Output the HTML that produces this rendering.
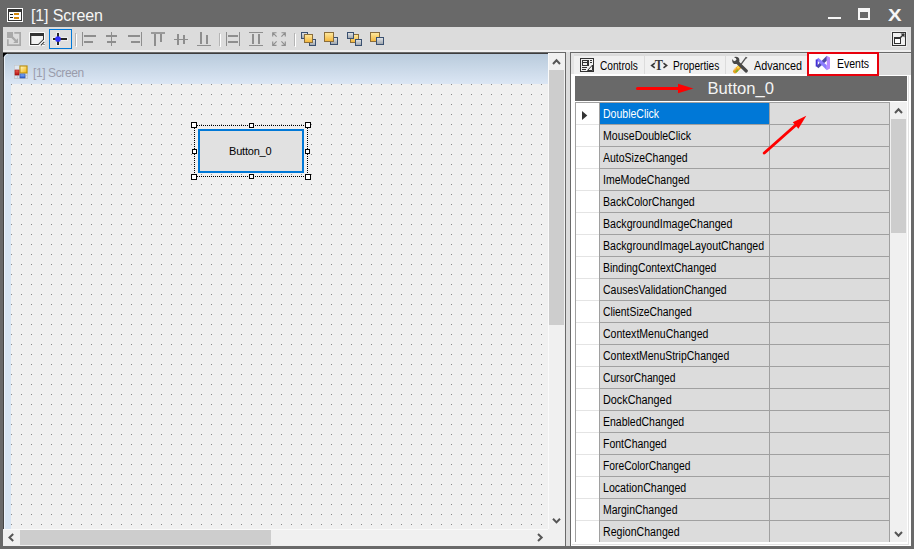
<!DOCTYPE html>
<html lang="en"><head><meta charset="utf-8"><title>[1] Screen</title>
<style>
html,body{margin:0;padding:0}
body{width:914px;height:549px;background:#696969;overflow:hidden;position:relative;
 font-family:"Liberation Sans",sans-serif;font-size:12px;color:#000}
div,span,svg{position:absolute;box-sizing:border-box}
svg{overflow:visible}
.ttl{left:31px;top:7px;letter-spacing:-0.12px;font-size:16px;line-height:18px;color:#f6f6f6;white-space:nowrap}
.xbtn{left:888px;top:6px;font-size:17px;font-weight:bold;line-height:20px;color:#f6f6f6;transform-origin:0 0;transform:scaleX(1.2)}
.toolbar{left:3px;top:27px;width:908px;height:23px;background:#dcdcdc}
.tbline{left:3px;top:50px;width:908px;height:2px;background:#efefef}
/* left panel */
.lp{left:3px;top:52px;width:563px;height:494px;background:#f0f0f0;border-top:1px solid #696969;border-right:1px solid #696969}
.formtop{left:4px;top:53px;width:544px;height:1px;background:#3c3c3c}
.formttl{left:4px;top:54px;width:544px;height:30px;background:linear-gradient(#b9cbdc,#dbe6f4)}
.formleft{left:4px;top:84px;width:7px;height:445px;background:#d8e5f3}
.formedge{left:3px;top:53px;width:1px;height:476px;background:#444}
.formhl{left:4px;top:57px;width:1px;height:472px;background:rgba(240,246,253,.85)}
.client{left:11px;top:84px;width:537px;height:445px;background-color:#f0f0f0;
 background-image:radial-gradient(circle at 0.5px 0.5px,#898989 0.55px,rgba(137,137,137,0) 0.9px);background-size:10px 10px;}
.formname{left:33px;top:66px;font-size:12px;line-height:14px;color:#9a9cab;white-space:nowrap;letter-spacing:-0.4px}
.vs{left:548px;top:53px;width:17px;height:476px;background:#f0f0f0;border-left:1px solid #fafafa}
.vthumb{left:549px;top:70px;width:15px;height:255px;background:#cdcdcd}
.hs{left:4px;top:529px;width:544px;height:17px;background:#f0f0f0;border-top:1px solid #fafafa}
.hthumb{left:20px;top:530px;width:251px;height:15px;background:#cdcdcd}
.split{left:566px;top:52px;width:4px;height:494px;background:#dcdcdc}
/* right panel */
.rp{left:570px;top:52px;width:341px;height:494px;background:#dcdcdc;border-top:1px solid #696969;border-left:1px solid #696969}
.rpw{left:571px;top:74px;width:340px;height:472px;background:#fff}
.tabs{left:574px;top:56px;width:233px;height:18px;background:#f0f0f0}
.tsep{top:56px;width:1px;height:18px;background:#dcdcdc}
.tab{top:59px;font-size:12px;line-height:14px;white-space:nowrap;transform-origin:0 0}
.evbox{left:807px;top:52px;width:72px;height:24px;border:2px solid #e8000c;background:#fff}
.hdr{left:575px;top:76px;width:332px;height:25px;background:#696969}
.hdrt{left:707.5px;top:80px;font-size:16.6px;line-height:18px;color:#f4f4f4;white-space:nowrap}
.gridbg{left:599px;top:102px;width:291px;height:440px;background:#a0a0a0}
.rhbg{left:575px;top:102px;width:24px;height:440px;background:#e4e4e4;border-left:1px solid #a0a0a0;border-top:1px solid #a0a0a0}
.rh{left:576px;width:23px;height:21px;background:#fff}
.rhl{left:576px;width:23px;height:1px;background:#e4e4e4}
.c1{left:600px;width:169px;height:21px;background:#dcdcdc;overflow:hidden}
.c1.sel{background:#0078d7;color:#fff}
.c2{left:770px;width:119px;height:21px;background:#dcdcdc}
.ct{left:3px;top:4px;font-size:12px;line-height:14px;white-space:nowrap;transform-origin:0 0;transform:scaleX(0.89)}
.rvs{left:890px;top:102px;width:17px;height:440px;background:#f0f0f0}
.rvthumb{left:891px;top:119px;width:15px;height:114px;background:#cdcdcd}
/* designer button */
.btn{left:198px;top:129px;width:106px;height:44px;border:2px solid #0078d7;background:#e1e1e1}
.btnt{left:229px;top:145px;font-size:11px;line-height:13px;white-space:nowrap;letter-spacing:-0.2px}
.h6{width:6px;height:6px;border:1px solid #000;background:#fff}
.h5{width:5px;height:5px;border:1px solid #000;background:#fff}
.rpl{left:571px;top:53px;width:3px;height:21px;background:#e4e4e4}
.bevv{left:908px;top:76px;width:1px;height:469px;background:#e2e2e2}
.bevh{left:572px;top:544px;width:337px;height:1px;background:#e2e2e2}
.rpt{left:571px;top:53px;width:340px;height:1px;background:#e4e4e4}

</style></head>
<body>
<!-- title bar -->
<svg style="left:7px;top:8px" width="16" height="14" viewBox="0 0 16 14"><rect x="0" y="0" width="16" height="14" fill="#fff"/><rect x="1" y="1" width="14" height="12" fill="#333"/><rect x="2" y="4" width="12" height="8" fill="#fff"/><rect x="3" y="6" width="3" height="1" fill="#222"/><rect x="3" y="9" width="3" height="1" fill="#222"/><rect x="7" y="5" width="5" height="2" fill="#d6870b"/><rect x="7" y="9" width="5" height="2" fill="#d6870b"/></svg>
<div class="ttl">[1] Screen</div>
<div style="left:828px;top:17px;width:13px;height:2px;background:#f6f6f6"></div>
<div style="left:858px;top:8px;width:12px;height:12px;border:2px solid #f6f6f6;border-top-width:4px"></div>
<div class="xbtn">X</div>
<div class="toolbar"></div><div class="tbline"></div>
<svg style="left:0;top:0" width="914" height="52" viewBox="0 0 914 52">
<defs>
<linearGradient id="gy" x1="0" y1="0" x2="0" y2="1"><stop offset="0" stop-color="#ffeaa0"/><stop offset="1" stop-color="#f3b53a"/></linearGradient>
<linearGradient id="gg" x1="0" y1="0" x2="0" y2="1"><stop offset="0" stop-color="#e4e6e8"/><stop offset="1" stop-color="#9aa2aa"/></linearGradient>
</defs>
<!-- icon1 disabled -->
<g fill="#a9a9a9" shape-rendering="crispEdges">
<rect x="7" y="32" width="6" height="6"/>
<path d="M14.300 32H21V46H7V39.300H8.700V44.300H19.300V33.700H14.300Z" shape-rendering="auto"/>
</g>
<path d="M12 37L16.500 41.500" stroke="#a9a9a9" stroke-width="2.300"/>
<path d="M18 38.200V43H13.200Z" fill="#a9a9a9"/>
<!-- icon2 window w/ pencil -->
<rect x="29" y="32" width="16" height="14" rx="1" fill="#fff" opacity=".9"/>
<path d="M30 33H44V39.500L38.500 45H30Z" fill="#333"/>
<path d="M31.300 36H43V39.200L38.200 44H31.300Z" fill="#f2f2f2"/>
<path d="M40.800 45.300L44.300 41.800" stroke="#333" stroke-width="1.100"/>
<rect x="43.500" y="44" width="1" height="1" fill="#333"/>
<!-- icon3 selected crosshair -->
<rect x="49.5" y="29.5" width="22" height="19" fill="#dedede" stroke="#0078d7" stroke-width="1"/>
<g shape-rendering="crispEdges"><rect x="52" y="37" width="16" height="4" fill="#eee"/><rect x="56" y="32" width="4" height="14" fill="#eee"/>
<rect x="53" y="38" width="14" height="2" fill="#262626"/><rect x="57" y="33" width="2" height="12" fill="#262626"/></g>
<circle cx="58" cy="39" r="2.850" fill="#3232ff"/>
<!-- separators -->
<g shape-rendering="crispEdges">
<rect x="75" y="33" width="1" height="13" fill="#b4b4b4"/><rect x="76" y="34" width="1" height="13" fill="#fff"/>
<rect x="219" y="33" width="1" height="13" fill="#b4b4b4"/><rect x="220" y="34" width="1" height="13" fill="#fff"/>
<rect x="294" y="33" width="1" height="13" fill="#b4b4b4"/><rect x="295" y="34" width="1" height="13" fill="#fff"/>
</g>
<!-- align icons -->
<g fill="#8e8e8e" shape-rendering="crispEdges">
<rect x="82" y="32" width="1" height="14"/><rect x="84" y="35" width="12" height="2"/><rect x="84" y="41" width="9" height="2"/>
<rect x="111" y="32" width="1" height="14"/><rect x="106" y="35" width="11" height="2"/><rect x="107" y="41" width="9" height="2"/>
<rect x="141" y="32" width="1" height="14"/><rect x="128" y="35" width="12" height="2"/><rect x="131" y="41" width="9" height="2"/>
<rect x="151" y="32" width="14" height="2" fill="#9a9a9a"/><rect x="154" y="34" width="2" height="12"/><rect x="160" y="34" width="2" height="8"/>
<rect x="174" y="39" width="14" height="1"/><rect x="177" y="34" width="2" height="11"/><rect x="183" y="35" width="2" height="9"/>
<rect x="197" y="45" width="14" height="1"/><rect x="200" y="32" width="2" height="12"/><rect x="206" y="35" width="2" height="9"/>
<rect x="226" y="32" width="1" height="14"/><rect x="239" y="32" width="1" height="14"/><rect x="228" y="35" width="10" height="2"/><rect x="228" y="41" width="10" height="2"/>
<rect x="249" y="32" width="14" height="1"/><rect x="249" y="45" width="14" height="1"/><rect x="252" y="34" width="2" height="10"/><rect x="258" y="34" width="2" height="10"/>
</g>
<!-- same size arrows -->
<g stroke="#8e8e8e" stroke-width="1.150" fill="none">
<path d="M272.7 32.7L276.600 36.600M272.7 36.5V32.7H276.5"/>
<path d="M285.3 32.7L281.400 36.600M285.3 36.5V32.7H281.5"/>
<path d="M272.7 45.3L276.600 41.400M272.7 41.5V45.3H276.5"/>
<path d="M285.3 45.3L281.400 41.400M285.3 41.5V45.3H281.5"/>
</g>
<!-- z-order icons -->
<g stroke-width="1">
<rect x="301.5" y="32.5" width="6" height="6" fill="url(#gg)" stroke="#3a5070"/>
<rect x="309.5" y="39.5" width="6" height="6" fill="url(#gg)" stroke="#3a5070"/>
<rect x="304.5" y="34.5" width="8" height="8" fill="url(#gy)" stroke="#8a6d3b"/>

<rect x="330.5" y="37.5" width="7" height="7" fill="url(#gg)" stroke="#3a5070"/>
<rect x="324.5" y="32.5" width="9" height="9" fill="url(#gy)" stroke="#8a6d3b"/>

<rect x="350.5" y="34.5" width="8" height="8" fill="url(#gy)" stroke="#8a6d3b"/>
<rect x="347.5" y="32.5" width="6" height="6" fill="url(#gg)" stroke="#3a5070"/>
<rect x="355.5" y="39.5" width="6" height="6" fill="url(#gg)" stroke="#3a5070"/>

<rect x="370.5" y="32.5" width="9" height="9" fill="url(#gy)" stroke="#8a6d3b"/>
<rect x="376.5" y="37.5" width="7" height="7" fill="url(#gg)" stroke="#3a5070"/>
</g>
<!-- undock icon right -->
<rect x="891" y="31" width="16" height="16" fill="#f4f4f4" opacity=".7"/>
<rect x="892.5" y="32.5" width="13" height="13" fill="#f0f0f0" stroke="#333"/>
<rect x="894.5" y="38" width="6" height="5.5" fill="#fff" stroke="#333"/>
<rect x="894" y="37" width="7" height="2" fill="#333"/>
<path d="M899.5 38.500L904 34" stroke="#333" stroke-width="1.400"/>
<path d="M900.500 33.500H904.500V37.500Z" fill="#333"/>
</svg>

<!-- left panel -->
<div class="lp"></div>
<div class="formtop"></div><div class="formttl"></div><div class="formleft"></div><div class="formedge"></div><div class="formhl"></div><div class="client"></div>
<svg style="left:3px;top:53px" width="6" height="6" viewBox="0 0 6 6"><path d="M0 0H5Q1.500 1.500 0 5Z" fill="#000"/><path d="M5 1Q2 2 1 5" stroke="#eef3fb" stroke-width=".8" fill="none" opacity=".8"/></svg>
<!-- form icon -->
<svg style="left:0;top:0" width="60" height="90" viewBox="0 0 60 90">
<defs>
<linearGradient id="fy" x1="0" y1="0" x2="1" y2="1"><stop offset="0" stop-color="#fffbd0"/><stop offset="1" stop-color="#f3b000"/></linearGradient>
<linearGradient id="fr" x1="0" y1="0" x2="0" y2="1"><stop offset="0" stop-color="#f06050"/><stop offset="1" stop-color="#b01010"/></linearGradient>
<linearGradient id="fb" x1="0" y1="0" x2="0" y2="1"><stop offset="0" stop-color="#8ab4ff"/><stop offset="1" stop-color="#2a5ccc"/></linearGradient>
</defs>
<g fill="none" stroke="#c4c8cc" stroke-width="1" shape-rendering="crispEdges">
<rect x="14.5" y="65.5" width="13" height="13"/><path d="M19.5 65V79M14 70.5H20M14 75.5H28M25.500 75V79M17.5 75V79"/></g>
<rect x="14.7" y="65.7" width="4.6" height="4.6" fill="#dfe7f1"/>
<rect x="20" y="66" width="7" height="7" fill="url(#fy)" stroke="#b88a00" stroke-width="1"/>
<rect x="15" y="70" width="4" height="5" fill="url(#fr)" stroke="#a01010" stroke-width=".6"/>
<rect x="20" y="74" width="5" height="4" fill="url(#fb)" stroke="#2a50b0" stroke-width=".6"/>
</svg>

<div class="formname">[1] Screen</div>
<div class="vs"></div><div class="vthumb"></div>
<div class="hs"></div><div class="hthumb"></div>
<div style="left:548px;top:529px;width:17px;height:17px;background:#f0f0f0"></div>

<!-- designer button -->
<svg style="left:0;top:0" width="330" height="200" viewBox="0 0 330 200">
<g stroke="#000" stroke-width="1" stroke-dasharray="1 1" fill="none" shape-rendering="crispEdges">
<path d="M197 125.500H305"/><path d="M197 176.500H305"/><path d="M194.500 128V174"/><path d="M307.500 128V174"/>
</g>
<g fill="#fff" stroke="#000" stroke-width="1" shape-rendering="crispEdges">
<rect x="191.500" y="122.500" width="5" height="5"/><rect x="305.500" y="122.500" width="5" height="5"/>
<rect x="191.500" y="174.500" width="5" height="5"/><rect x="305.500" y="174.500" width="5" height="5"/>
<rect x="249.500" y="123.500" width="4" height="4"/><rect x="249.500" y="174.500" width="4" height="4"/>
<rect x="192.500" y="149.500" width="4" height="4"/><rect x="305.500" y="149.500" width="4" height="4"/>
</g>
</svg>

<div class="btn"></div><div class="btnt">Button_0</div>
<div class="split"></div>
<!-- right panel -->
<div class="rp"></div><div class="rpl"></div><div class="rpt"></div><div class="rpw"></div><div class="bevv"></div><div class="bevh"></div>
<div class="tabs"></div>
<div class="tsep" style="left:644px"></div><div class="tsep" style="left:725px"></div>
<div class="tab" style="left:600px;transform:scaleX(.845)">Controls</div>
<div class="tab" style="left:673px;transform:scaleX(.845)">Properties</div>
<div class="tab" style="left:753.5px;transform:scaleX(.9)">Advanced</div>
<div style="left:879px;top:74px;width:32px;height:1px;background:#dcdcdc"></div><div class="evbox"></div>
<div class="tab" style="left:836.500px;top:57px;transform:scaleX(.875)">Events</div>
<svg style="left:0;top:0" width="914" height="80" viewBox="0 0 914 80">
<!-- controls icon -->
<g shape-rendering="crispEdges" fill="none" stroke="#333" stroke-width="1">
<rect x="580.500" y="58.500" width="13" height="13"/>
<rect x="582.500" y="60.500" width="6" height="5"/>
<path d="M583 62.500H587M587.500 60V66M590 60.500H592M590 62.500H592M582 67.500H587M582 69.500H586"/>
</g>
<path d="M587.500 70.500L592.500 65V70.500Z" fill="none" stroke="#333" stroke-width="1"/>
<!-- <T> icon -->
<g fill="none" stroke="#383838" stroke-width="1.600"><path d="M654.800 63.200L651.700 65.500L654.800 67.800"/><path d="M663.500 63.200L666.600 65.500L663.500 67.800"/></g>
<text transform="translate(654.800 70) scale(.82 1)" font-family="'Liberation Serif',serif" font-size="15" font-weight="bold" fill="#383838">T</text>
<!-- tools icon -->
<g>
<path d="M747.200 58L746 57.600L740.300 65.300" stroke="#555" stroke-width="1.300" fill="none"/>
<path d="M740.300 66L735 71.300" stroke="#e9a21f" stroke-width="4" stroke-linecap="round"/>
<path d="M740.300 65.200L738 67.500" stroke="#ffd84a" stroke-width="2.400" stroke-linecap="round"/>
<path d="M737.600 70.300L736.200 71.600" stroke="#7fb52a" stroke-width="1.600" stroke-linecap="round"/>
<path d="M735.800 68.200L734.300 69.700" stroke="#f6c56a" stroke-width="1.200" stroke-linecap="round"/>
<path d="M737 62L746.300 71" stroke="#484848" stroke-width="3.200" stroke-linecap="round"/>
<circle cx="735.800" cy="60.400" r="3.600" fill="#484848"/>
<path d="M731.500 58.500L733.300 56.300L736.200 59.200L734.400 61.200Z" fill="#f0f0f0"/>
<circle cx="734.700" cy="59.300" r="1.500" fill="#f4f4f4"/>
</g>
<!-- VS icon -->
<g>
<path d="M816.400 66.300L818.300 68.200L826.800 60.700V55.700Z" fill="#4c49a6"/>
<path d="M816.400 59.700L818.300 57.800L826.800 65.300V70.200Z" fill="#8b7dff"/>
<rect x="815.700" y="59.500" width="2" height="7" fill="#4330d8"/>
<path d="M826.800 55.700L830 57.500V68.500L826.800 70.200Z" fill="#b78cff"/>
</g>
</svg>

<div class="hdr"></div><div class="hdrt">Button_0</div>
<div class="rhbg"></div><div class="gridbg"></div>
<div class="rh" style="top:103px"></div><div class="c1 sel" style="top:103px"><span class="ct" style="transform:scaleX(0.876)">DoubleClick</span></div><div class="c2" style="top:103px"></div>
<div class="rh" style="top:125px"></div><div class="c1" style="top:125px"><span class="ct" style="transform:scaleX(0.879)">MouseDoubleClick</span></div><div class="c2" style="top:125px"></div>
<div class="rh" style="top:147px"></div><div class="c1" style="top:147px"><span class="ct" style="transform:scaleX(0.874)">AutoSizeChanged</span></div><div class="c2" style="top:147px"></div>
<div class="rh" style="top:169px"></div><div class="c1" style="top:169px"><span class="ct" style="transform:scaleX(0.877)">ImeModeChanged</span></div><div class="c2" style="top:169px"></div>
<div class="rh" style="top:191px"></div><div class="c1" style="top:191px"><span class="ct" style="transform:scaleX(0.881)">BackColorChanged</span></div><div class="c2" style="top:191px"></div>
<div class="rh" style="top:213px"></div><div class="c1" style="top:213px"><span class="ct" style="transform:scaleX(0.886)">BackgroundImageChanged</span></div><div class="c2" style="top:213px"></div>
<div class="rh" style="top:235px"></div><div class="c1" style="top:235px"><span class="ct" style="transform:scaleX(0.885)">BackgroundImageLayoutChanged</span></div><div class="c2" style="top:235px"></div>
<div class="rh" style="top:257px"></div><div class="c1" style="top:257px"><span class="ct" style="transform:scaleX(0.872)">BindingContextChanged</span></div><div class="c2" style="top:257px"></div>
<div class="rh" style="top:279px"></div><div class="c1" style="top:279px"><span class="ct" style="transform:scaleX(0.875)">CausesValidationChanged</span></div><div class="c2" style="top:279px"></div>
<div class="rh" style="top:301px"></div><div class="c1" style="top:301px"><span class="ct" style="transform:scaleX(0.863)">ClientSizeChanged</span></div><div class="c2" style="top:301px"></div>
<div class="rh" style="top:323px"></div><div class="c1" style="top:323px"><span class="ct" style="transform:scaleX(0.878)">ContextMenuChanged</span></div><div class="c2" style="top:323px"></div>
<div class="rh" style="top:345px"></div><div class="c1" style="top:345px"><span class="ct" style="transform:scaleX(0.872)">ContextMenuStripChanged</span></div><div class="c2" style="top:345px"></div>
<div class="rh" style="top:367px"></div><div class="c1" style="top:367px"><span class="ct" style="transform:scaleX(0.855)">CursorChanged</span></div><div class="c2" style="top:367px"></div>
<div class="rh" style="top:389px"></div><div class="c1" style="top:389px"><span class="ct" style="transform:scaleX(0.903)">DockChanged</span></div><div class="c2" style="top:389px"></div>
<div class="rh" style="top:411px"></div><div class="c1" style="top:411px"><span class="ct" style="transform:scaleX(0.875)">EnabledChanged</span></div><div class="c2" style="top:411px"></div>
<div class="rh" style="top:433px"></div><div class="c1" style="top:433px"><span class="ct" style="transform:scaleX(0.876)">FontChanged</span></div><div class="c2" style="top:433px"></div>
<div class="rh" style="top:455px"></div><div class="c1" style="top:455px"><span class="ct" style="transform:scaleX(0.857)">ForeColorChanged</span></div><div class="c2" style="top:455px"></div>
<div class="rh" style="top:477px"></div><div class="c1" style="top:477px"><span class="ct" style="transform:scaleX(0.885)">LocationChanged</span></div><div class="c2" style="top:477px"></div>
<div class="rh" style="top:499px"></div><div class="c1" style="top:499px"><span class="ct" style="transform:scaleX(0.872)">MarginChanged</span></div><div class="c2" style="top:499px"></div>
<div class="rh" style="top:521px"></div><div class="c1" style="top:521px"><span class="ct" style="transform:scaleX(0.883)">RegionChanged</span></div><div class="c2" style="top:521px"></div>
<div class="rvs"></div><div class="rvthumb"></div>
<!-- scroll chevrons -->
<svg style="left:0;top:0" width="914" height="549" viewBox="0 0 914 549">
<g fill="none" stroke="#555" stroke-width="2">
<path d="M553 64L556.500 60.300L560 64"/>
<path d="M553 518.700L556.500 522.400L560 518.700"/>
<path d="M13.200 534L9.500 537.500L13.200 541"/>
<path d="M538 534L541.700 537.500L538 541"/>
<path d="M895 113L898.500 109.300L902 113"/>
<path d="M895 532L898.500 535.700L902 532"/>
</g>
<path d="M582 111L587.300 115.500L582 120Z" fill="#333"/>
<!-- red arrows -->
<path d="M637.500 88.500H680" stroke="#ff0000" stroke-width="3" stroke-linecap="round"/>
<path d="M678 83.800L693.400 88.500L678 93.200Z" fill="#ff0000"/>
<path d="M764.300 153L797 124" stroke="#ff0000" stroke-width="3" stroke-linecap="round"/>
<path d="M806.300 115.700L798.400 128.700L792.800 122.200Z" fill="#ff0000"/>
</svg>


</body></html>
